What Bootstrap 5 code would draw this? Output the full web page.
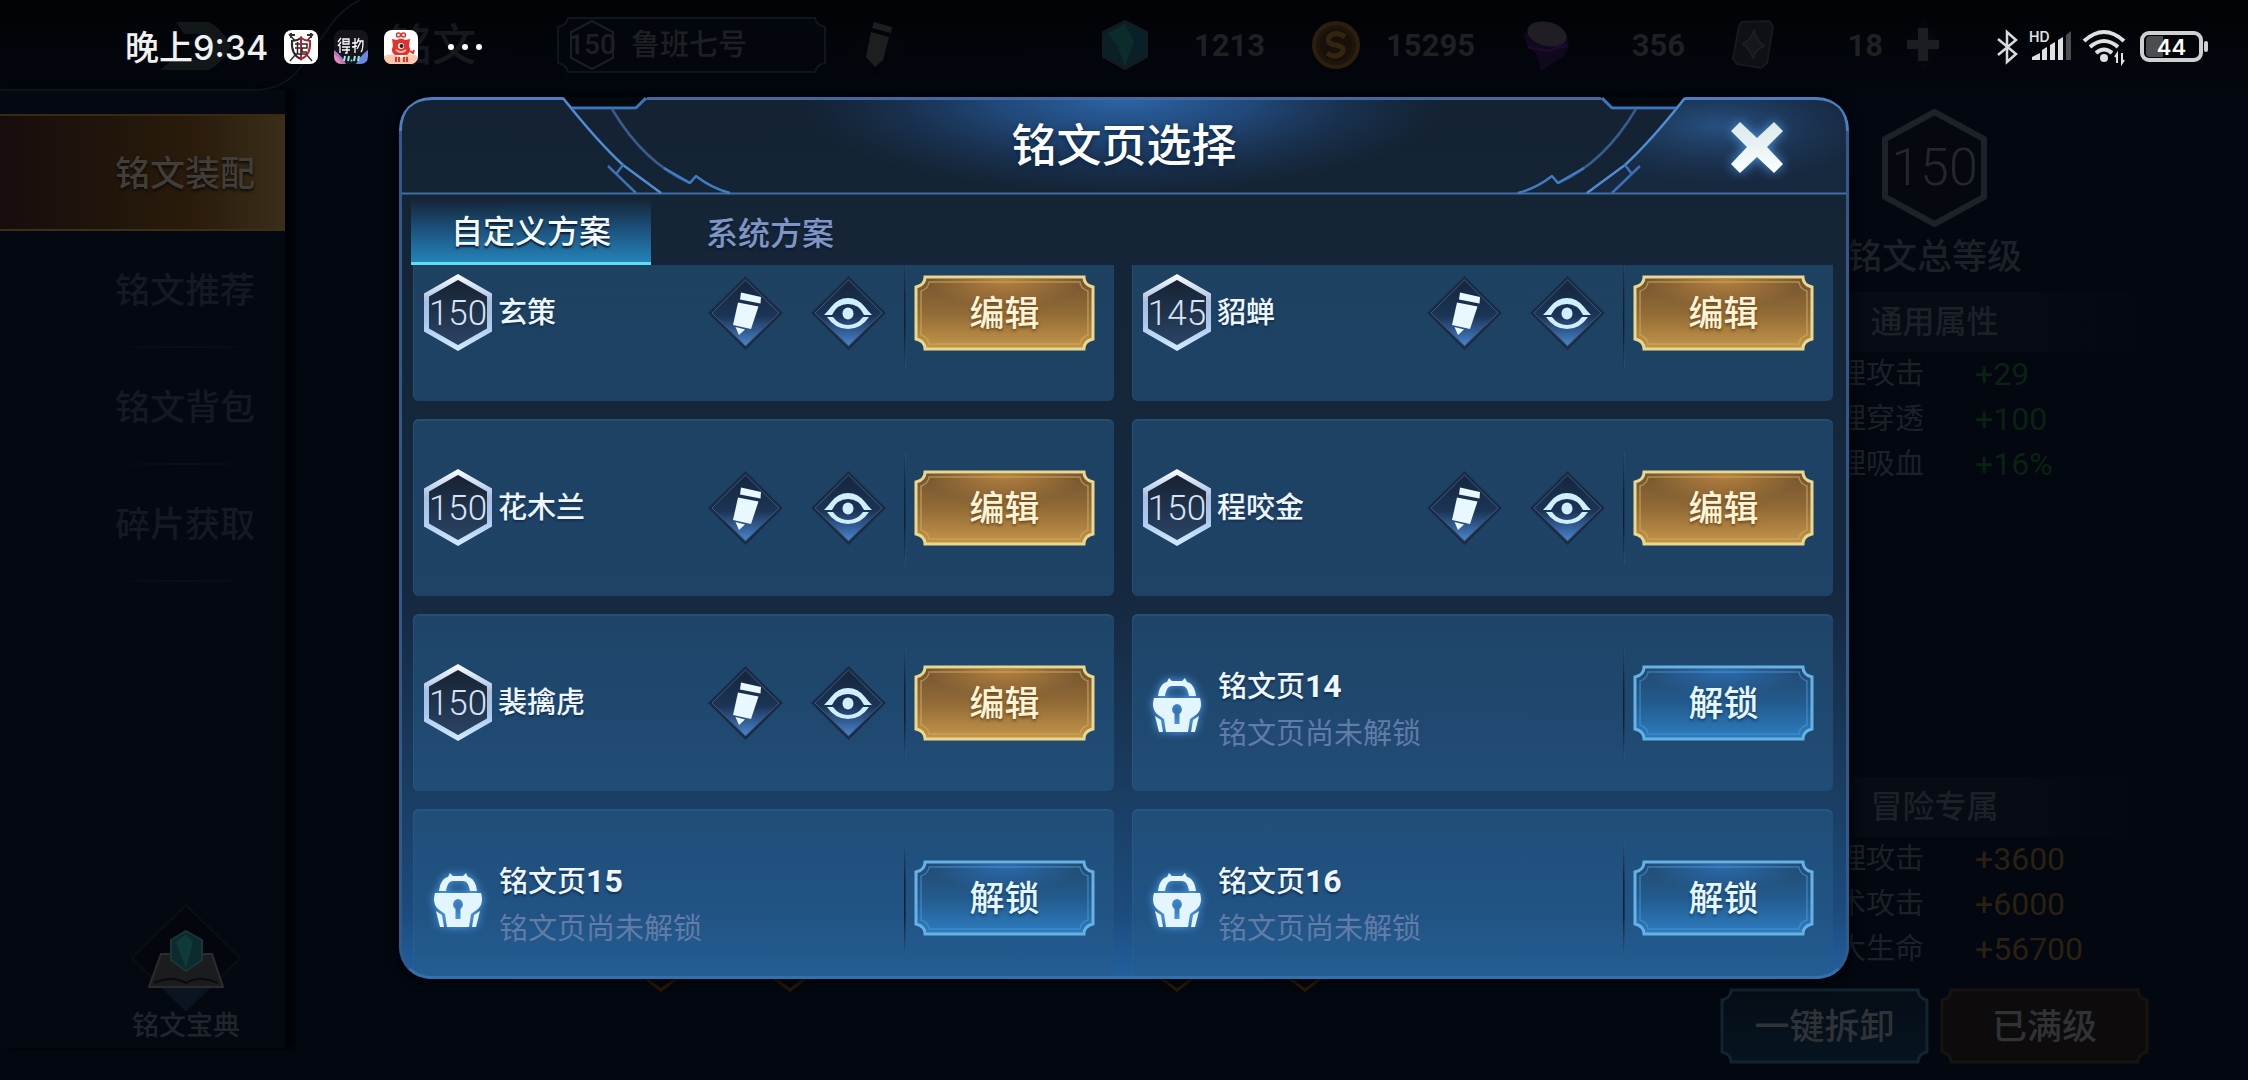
<!DOCTYPE html>
<html lang="zh-CN">
<head>
<meta charset="utf-8">
<meta name="viewport" content="width=device-width, initial-scale=1">
<title>铭文页选择</title>
<link rel="stylesheet" href="https://cdn.jsdelivr.net/npm/bootstrap@5.3.0/dist/css/bootstrap.min.css">
<style>
  body { background: #03070f; color: #fff; font-family: Roboto, "Noto Sans CJK SC", sans-serif; font-weight: 500; line-height: 1; overflow: hidden; }
  svg { display: block; flex: none; }
  button { font: inherit; }
  .stage { background: linear-gradient(#010305, #030710 110px, #03070f); }

  /* dimmed page */
  .topbar { height: 90px; padding-right: 307px; color: #1e2022; }
  .back-zone { width: 557px; height: 90px; }
  .back-zone svg.edge { position: absolute; left: 0; top: 0; }
  .page-name { position: absolute; left: 388px; top: 24px; font-size: 44px; color: #15191d; }
  .page-pick { width: 269px; height: 56px; font-size: 29px; color: #1d2023; padding-left: 12px; }
  .lvl-small { position: relative; width: 46px; height: 52px; font-size: 28px; }
  .coin-list { font-size: 31px; font-weight: 700; gap: 47px; }
  .coin-cell { width: 163px; }
  .coin-cell.narrow { width: 151px; margin-right: -25px; }
  .sidebar { width: 285px; background: #040911; box-shadow: 8px 0 6px #010207; margin-bottom: 32px; font-size: 35px; }
  .side-link { height: 117px; padding: 3px 0 0 115px; color: #141922; text-decoration: none; position: relative; }
  .side-link::after { content: ""; position: absolute; left: 105px; right: 23px; bottom: 0; height: 2px; background: linear-gradient(90deg, transparent, #0b0f18, transparent); }
  .side-link.current { color: #413e39; background: linear-gradient(90deg, #170d0d, #20140b 35%, #2b1c0b 70%, #3a2f1b); border-top: 2px solid #3a2a12; border-bottom: 2px solid #3a2f18; text-shadow: 0 2px 3px #0d0a05; }
  .side-link.current::after { display: none; }
  .codex { width: 112px; margin-left: 130px; font-size: 27px; color: #20242b; text-decoration: none; }
  .stats { width: 429px; margin-right: 99px; font-size: 29px; color: #1d2127; font-weight: 400; }
  .total-lvl { position: relative; width: 105px; height: 120px; font-size: 52px; font-weight: 300; color: #24272c; margin-top: 18px; }
  .total-name { height: 58px; font-size: 35px; font-weight: 500; margin-bottom: 6px; }
  .stat-head { height: 60px; font-size: 32px; font-weight: 500; background: linear-gradient(90deg, transparent, #060b14 30%, #060b14 70%, transparent); margin: 0; }
  .stat-list { padding-left: 88px; margin: 0; }
  .stat-list dt { width: 167px; font-weight: 400; line-height: 45px; }
  .stat-list dd { margin: 0; font-size: 32px; line-height: 45px; }
  .gain { color: #0a2210; }
  .gain-gold { color: #2a2111; }

  /* plates used as buttons */
  .plate { position: relative; height: 76px; border: 0; background: none; padding: 3px 0 0; font-size: 35px; flex: none; }
  .plate > svg { position: absolute; left: 0; top: 0; width: 100%; height: 100%; }
  .plate > span, .hexa > span { position: relative; }
  .plate-dim { width: 209px; color: #303336; }

  /* phone status bar */
  .phone-bar { position: absolute; left: 0; right: 0; top: 0; height: 94px; padding: 0 38px 0 125px; z-index: 30; }
  .clock { font-family: Inter, "Noto Sans CJK SC", sans-serif; font-size: 34px; color: #f0f1f1; white-space: nowrap; width: 159px; padding-top: 2px; }
  .batt { font-family: Inter, sans-serif; font-weight: 600; font-size: 22px; width: 70px; height: 32px; padding-right: 7px; }
  .signal { width: 46px; height: 36px; }
  .signal .hd { position: absolute; left: 1px; top: 1px; font: 600 14px/14px Inter, sans-serif; color: #dfe0e0; }

  /* dialog */
  .dlg-layer { position: absolute; inset: 0; padding: 97px 0 101px; z-index: 10; }
  .dlg { width: 64.5%; border-radius: 32px; background: linear-gradient(#142233, #152536 14%, #15283f 56%, #1a3c60 78%, #1c4a7c 92%, #22609f); box-shadow: 0 0 14px #000; position: relative; overflow: hidden; }
  .dlg-frame { position: absolute; inset: 34px 0 0; border: 3px solid #30598c; border-bottom-color: #3470ae; border-top: 0; border-radius: 0 0 32px 32px; pointer-events: none; z-index: 3; }
  .dlg-head { height: 98px; position: relative; }
  .dlg-head > svg { position: absolute; left: 0; top: 0; width: 100%; height: 100%; }
  .dlg-title { position: relative; font-size: 45px; font-weight: 500; text-shadow: 0 2px 5px #0b2344; padding-top: 2px; }
  .dlg-close { position: absolute; right: 64px; top: 22px; border: 0; background: none; padding: 0; }
  .dlg-close svg { filter: drop-shadow(0 0 6px #4d93dd); }
  .dlg-tabs { height: 70px; padding: 4px 0 0 12px; position: relative; z-index: 2; }
  .dlg-tab { width: 240px; border: 0; background: none; color: #7f95c6; font-size: 32px; padding: 3px 0 0; text-shadow: 0 2px 2px #0c1a2c; }
  .dlg-tab.current { color: #f4faff; background: linear-gradient(#16304a00, #1b4f78 45%, #2483b8); border-bottom: 3px solid #5fdcf5; }
  .dlg-tab + .dlg-tab { width: 238px; }
  .plan-scroll { overflow-y: auto; scrollbar-width: none; padding: 0 16px 0 14px; flex: 1 1 0; min-height: 0; }
  .plan-scroll::-webkit-scrollbar { display: none; }
  .plan-grid { display: grid; grid-template-columns: 1fr 1fr; gap: 18px; }
  .plan { height: 177px; border-radius: 6px; background: rgba(39, 92, 138, .52); box-shadow: inset 0 2px 0 #3a709f44, inset 1px 0 0 #3a709f44; padding: 0 19px 0 11px; }
  .hexa { position: relative; width: 68px; height: 77px; padding-top: 2px; font-weight: 300; font-size: 35px; color: #d5e3f5; margin-right: 6px; flex: none; }
  .hexa > svg, .total-lvl > svg, .lvl-small > svg { position: absolute; left: 0; top: 0; }
  .total-lvl > span, .lvl-small > span { position: relative; }
  .plan-name { font-size: 29px; color: #eef6ff; text-shadow: 0 2px 2px #12304f; padding-top: 2px; }
  .plan-name b { font-size: 32px; }
  .icon-btn { border: 0; background: none; padding: 0; margin-right: 26px; flex: none; }
  .rule { width: 2px; height: 112px; background: linear-gradient(transparent, #10233a 35%, #0e1f33 65%, transparent); border-right: 1px solid #3d6f9d44; margin: 0 8px 0 0; flex: none; }
  .icon-btn + .rule { margin-left: -9px; }
  .lock { margin: 4px 12px 0 9px; filter: drop-shadow(0 0 4px #55a8ff); }
  .locked-text { padding-top: 13px; }
  .locked-text .plan-name { line-height: 46px; }
  .locked-note { font-size: 29px; font-weight: 400; line-height: 48px; color: #617ca6; }
  .plate-gold, .plate-blue { width: 181px; }
  .plate-gold { color: #fff3d8; text-shadow: 0 2px 3px #6b4819; }
  .plate-blue { color: #e6f6ff; text-shadow: 0 2px 3px #123f6b; }
</style>
<script src="https://cdn.jsdelivr.net/npm/bootstrap@5.3.0/dist/js/bootstrap.bundle.min.js"></script>
</head>
<body>

<svg width="0" height="0" class="position-absolute" aria-hidden="true">
  <defs>
    <linearGradient id="gHex" x1="0" y1="0" x2="0" y2="1"><stop offset="0" stop-color="#f2f8ff"/><stop offset=".35" stop-color="#a8bfe0"/><stop offset=".65" stop-color="#a9c8f0"/><stop offset="1" stop-color="#cfe8ff"/></linearGradient>
    <linearGradient id="gHexIn" x1="0" y1="0" x2="0" y2="1"><stop offset="0" stop-color="#15202f"/><stop offset="1" stop-color="#2c4668"/></linearGradient>
    <linearGradient id="gDia" x1="0" y1="0" x2="0" y2="1"><stop offset="0" stop-color="#15253b"/><stop offset=".55" stop-color="#1b3557"/><stop offset="1" stop-color="#4a85cf"/></linearGradient>
    <linearGradient id="gGold" x1="0" y1="0" x2="0" y2="1"><stop offset="0" stop-color="#735430"/><stop offset=".5" stop-color="#916a36"/><stop offset="1" stop-color="#c5964a"/></linearGradient>
    <radialGradient id="gGoldTop" cx=".5" cy="0" r=".5"><stop offset="0" stop-color="#b88340"/><stop offset="1" stop-color="#b88340" stop-opacity="0"/></radialGradient>
    <linearGradient id="gBlue" x1="0" y1="0" x2="0" y2="1"><stop offset="0" stop-color="#22496f"/><stop offset=".5" stop-color="#235b8d"/><stop offset="1" stop-color="#2d7dc0"/></linearGradient>
    <radialGradient id="gBlueTop" cx=".5" cy="0" r=".5"><stop offset="0" stop-color="#2c6cb0"/><stop offset="1" stop-color="#2c6cb0" stop-opacity="0"/></radialGradient>
    <linearGradient id="gDimB" x1="0" y1="0" x2="0" y2="1"><stop offset="0" stop-color="#060d16"/><stop offset="1" stop-color="#061420"/></linearGradient>
    <radialGradient id="gHead" cx=".5" cy="0" r="1" gradientTransform="translate(.25 0) scale(.5 1)"><stop offset="0" stop-color="#2d66aa"/><stop offset=".4" stop-color="#255590" stop-opacity=".75"/><stop offset="1" stop-color="#1b3a66" stop-opacity="0"/></radialGradient>
    <radialGradient id="gCorner" cx=".5" cy=".3" r=".6"><stop offset="0" stop-color="#27507f"/><stop offset="1" stop-color="#1a3152" stop-opacity=".35"/></radialGradient>
    <linearGradient id="gX" x1="0" y1="0" x2="0" y2="1"><stop offset="0" stop-color="#dbe8ea"/><stop offset="1" stop-color="#fbffff"/></linearGradient>
  </defs>
  <symbol id="hex" viewBox="0 0 68 77"><path d="M34 3 65.500 21V56L34 74 2.500 56V21Z" fill="url(#gHexIn)" stroke="url(#gHex)" stroke-width="5"/></symbol>
  <symbol id="pen" viewBox="0 0 77 76">
    <path d="M38.500 1 76 38 38.500 75 1 38Z" fill="#192c46"/><path d="M38.500 5 72 38 38.500 71 5 38Z" fill="url(#gDia)" stroke="#41587a" stroke-width="1"/>
    <g fill="#e9f7ff"><path d="M34 17.500 54 22 53.500 28.500 33 24.500Z"/><path d="M31 27.500 51.500 31.500 44 54 26 50Z"/><path d="M28.500 52 38 54.500 32 60Z"/></g>
  </symbol>
  <symbol id="eye" viewBox="0 0 77 76">
    <path d="M38.500 1 76 38 38.500 75 1 38Z" fill="#192c46"/><path d="M38.500 5 72 38 38.500 71 5 38Z" fill="url(#gDia)" stroke="#41587a" stroke-width="1"/>
    <g fill="#cfeeff"><path d="M14 40Q18 36 21 32 28 23 38 23 48 23 55 32 58 36 62 40H54Q49 29 38 29 27 29 22 40Z"/><path d="M17 42H23Q29 50 38 50 47 50 53 42H59Q51 54 38 54 25 54 17 42Z"/><ellipse cx="38" cy="38.500" rx="5.500" ry="6"/></g>
  </symbol>
  <symbol id="lockIcon" viewBox="0 0 50 56">
    <g fill="#e3f5ff"><path d="M6 19C7 11 10 6 15 5L17 1 20 4H30L33 1 35 5C40 6 43 11 44 19H37C36 13 34 9 30 9H20C16 9 14 13 13 19Z"/>
    <path fill-rule="evenodd" d="M2 21H48Q51 31 45 37L38 42 36 55H14L12 42 5 37Q-1 31 2 21ZM25 27A5.500 5.500 0 0 0 22.500 37V47H27.500V37A5.500 5.500 0 0 0 25 27Z"/>
    <path d="M3 39 9 43 11 55H7Z"/><path d="M47 39 41 43 39 55H43Z"/></g>
  </symbol>
  <symbol id="plateGold" viewBox="0 0 180 76" preserveAspectRatio="none">
    <path d="M11 2H169Q169 10 178 12V64Q169 66 169 74H11Q11 66 2 64V12Q11 10 11 2Z" fill="url(#gGold)" stroke="#ead88f" stroke-width="3"/>
    <path d="M12 4H168V60H12Z" fill="url(#gGoldTop)"/>
    <path d="M15 7H165Q166 14 173 16V60Q166 62 165 69H15Q14 62 7 60V16Q14 14 15 7Z" fill="none" stroke="#d3a95c" stroke-opacity=".65" stroke-width="1.500"/>
  </symbol>
  <symbol id="plateBlue" viewBox="0 0 180 76" preserveAspectRatio="none">
    <path d="M11 2H169Q169 10 178 12V64Q169 66 169 74H11Q11 66 2 64V12Q11 10 11 2Z" fill="url(#gBlue)" stroke="#66b2e4" stroke-width="3"/>
    <path d="M12 4H168V60H12Z" fill="url(#gBlueTop)"/>
    <path d="M15 7H165Q166 14 173 16V60Q166 62 165 69H15Q14 62 7 60V16Q14 14 15 7Z" fill="none" stroke="#4a98d6" stroke-opacity=".6" stroke-width="1.500"/>
  </symbol>
  <symbol id="headDeco" viewBox="0 0 340 98">
    <path d="M164 1 177 13H238L248 1V-2H164Z" fill="#04080f"/>
    <g fill="none" stroke-width="2.500" stroke-linejoin="round">
      <path d="M1.500 98V34Q1.500 1.500 34 1.500H164" stroke="#4a7fc4" stroke-width="3"/>
      <path d="M164 1Q198 44 224 68L262 96" stroke="#4f8cd2"/>
      <path d="M173 11H237L247 1" stroke="#3e75bb" stroke-width="3"/>
      <path d="M213 12Q245 66 291 86" stroke="#3a5c8c"/>
      <path d="M265 71 291 86 297 79Q312 91 331 96" stroke="#3f7cc0"/>
      <path d="M209 69 237 96M224 68 217 77" stroke="#3c70b0"/>
    </g>
  </symbol>
</svg>

<div class="stage position-relative vh-100 overflow-hidden d-flex flex-column">

  <header class="topbar d-flex align-items-center">
    <div class="back-zone position-relative">
      <svg class="edge" width="557" height="94" aria-hidden="true"><path d="M0 90H255Q283 90 300 68L330 26Q340 10 360 0" fill="none" stroke="#0b141b" stroke-width="2"/><path d="M176 22H208Q220 26 231 46 220 66 208 70H160L172 60H200L212 46 200 34H184Z" fill="#121719"/></svg>
      <span class="page-name">铭文</span>
    </div>
    <div class="page-pick position-relative d-flex align-items-center gap-3">
      <svg class="position-absolute start-0 top-0" width="269" height="56" aria-hidden="true"><path d="M11 1H258Q259 8 268 10V46Q259 48 258 55H11Q10 48 1 46V10Q10 8 11 1Z" fill="#03060d" stroke="#10161d" stroke-width="2"/></svg>
      <span class="lvl-small d-flex align-items-center justify-content-center"><svg width="46" height="52" aria-hidden="true"><path d="M23 2 44 13V39L23 50 2 39V13Z" fill="none" stroke="#1b1f24" stroke-width="2"/></svg><span>150</span></span>
      <span class="position-relative">鲁班七号</span>
    </div>
    <svg class="ms-3" width="70" height="60" aria-hidden="true"><path d="M35 2 68 31 35 60 2 31Z" fill="#03050a"/><path d="M32 7 50 12 49 18 30 13ZM29 17 47 22 41 45 33 52 24 42Z" fill="#1b1f20"/></svg>
    <div class="coin-list d-flex align-items-center ms-auto">
      <span class="coin-cell d-flex align-items-center justify-content-between"><svg width="46" height="50" aria-hidden="true"><path d="M23 1 45 12V37L23 49 1 37V12Z" fill="#0a2024" stroke="#181a22" stroke-width="2"/><path d="M23 4 6 13 15 25 23 46 32 22 41 13Z" fill="#0c2c2c"/><path d="M23 4 32 22 42 34V14Z" fill="#082029"/></svg>1213</span>
      <span class="coin-cell d-flex align-items-center justify-content-between"><svg width="48" height="50" aria-hidden="true"><circle cx="24" cy="25" r="22" fill="#1e160b" stroke="#2d1f0d" stroke-width="4"/><circle cx="24" cy="25" r="16" fill="#17110a"/><path d="M33 17Q24 10 17 17 14 24 24 25 34 27 30 33 23 39 15 33" fill="none" stroke="#33250f" stroke-width="5"/></svg>15295</span>
      <span class="coin-cell d-flex align-items-center justify-content-between"><svg width="48" height="54" aria-hidden="true"><path d="M1 15 6 29 14 35 19 53 42 38 47 28 45 18Z" fill="#12081d"/><ellipse cx="25" cy="16" rx="20" ry="12" transform="rotate(14 25 16)" fill="#201d24"/><path d="M6 29 26 33 45 27" stroke="#1e0b2c" stroke-width="3" fill="none"/></svg>356</span>
      <span class="coin-cell narrow d-flex align-items-center justify-content-between"><svg width="42" height="50" aria-hidden="true"><path d="M10 2 37 1 41 6 35 43 29 48 5 44 1 39 7 6Z" fill="#0e1015" stroke="#17191d" stroke-width="2"/><path d="M22 10Q24 20 32 26 22 30 21 39 19 30 11 24 20 19 22 10Z" fill="#15171b" stroke="#1b1e22" stroke-width="2"/></svg>18</span>
      <svg width="36" height="60" aria-hidden="true"><path d="M18 4 35 30 18 58 1 30Z" fill="#04070d"/><path d="M13 13H23V25H34V34H23V46H13V34H2V25H13Z" fill="#1b1e21"/></svg>
    </div>
  </header>

  <div class="d-flex justify-content-between flex-grow-1">
    <nav class="sidebar d-flex flex-column pt-4">
      <a href="#" class="side-link current d-flex align-items-center">铭文装配</a>
      <a href="#" class="side-link d-flex align-items-center">铭文推荐</a>
      <a href="#" class="side-link d-flex align-items-center">铭文背包</a>
      <a href="#" class="side-link d-flex align-items-center">碎片获取</a>
      <a href="#" class="codex mt-auto d-flex flex-column align-items-center text-nowrap pb-2">
        <svg width="112" height="110" viewBox="0 0 112 110" aria-hidden="true"><path d="M56 2 110 55 56 108 2 55Z" fill="#03060d" stroke="#0b0e14" stroke-width="2"/><path d="M32 85H80L56 108Z" fill="#0b1421"/><path d="M31 51H82L93 84H19Z" fill="#1b1c1e" stroke="#2c2c2c" stroke-width="2"/><path d="M24 80Q42 72 56 80 70 72 88 80" fill="none" stroke="#080b10" stroke-width="2"/><path d="M56 28 72 37V57L56 68 41 57V37Z" fill="#0b2b2e" stroke="#1b3438" stroke-width="2"/><path d="M56 31 46 39 56 66 63 39Z" fill="#0f3a3a"/></svg>
        <span>铭文宝典</span>
      </a>
    </nav>

    <div class="flex-grow-1 d-flex align-items-end justify-content-center pe-4">
      <svg class="me-3" width="676" height="102" viewBox="0 0 676 102" aria-hidden="true"><path d="M0 0 16 12 32 0M129 0 145 12 161 0M516 0 532 12 548 0M644 0 660 12 676 0" fill="none" stroke="#2a1908" stroke-width="3"/></svg>
    </div>

    <aside class="stats d-flex flex-column">
      <div class="total-lvl d-flex align-items-center justify-content-center align-self-center"><svg width="105" height="120" aria-hidden="true"><path d="M52.500 4 102 31V89L52.500 116 3 89V31Z" fill="#05080f" stroke="#1d2128" stroke-width="6"/></svg><span>150</span></div>
      <div class="total-name d-flex align-items-center justify-content-center">铭文总等级</div>
      <h2 class="stat-head d-flex align-items-center justify-content-center">通用属性</h2>
      <dl class="stat-list">
        <div class="d-flex"><dt>物理攻击</dt><dd class="gain">+29</dd></div>
        <div class="d-flex"><dt>物理穿透</dt><dd class="gain">+100</dd></div>
        <div class="d-flex"><dt>物理吸血</dt><dd class="gain">+16%</dd></div>
      </dl>
      <h2 class="stat-head d-flex align-items-center justify-content-center mt-auto">冒险专属</h2>
      <dl class="stat-list">
        <div class="d-flex"><dt>物理攻击</dt><dd class="gain-gold">+3600</dd></div>
        <div class="d-flex"><dt>法术攻击</dt><dd class="gain-gold">+6000</dd></div>
        <div class="d-flex"><dt>最大生命</dt><dd class="gain-gold">+56700</dd></div>
      </dl>
      <div class="d-flex justify-content-between pt-3 pb-3 fw-medium">
        <button type="button" class="plate plate-dim"><svg viewBox="0 0 209 76" preserveAspectRatio="none" aria-hidden="true"><path d="M11 2H198Q198 10 207 12V64Q198 66 198 74H11Q11 66 2 64V12Q11 10 11 2Z" fill="url(#gDimB)" stroke="#11242f" stroke-width="3"/></svg><span>一键拆卸</span></button>
        <button type="button" class="plate plate-dim"><svg viewBox="0 0 209 76" preserveAspectRatio="none" aria-hidden="true"><path d="M11 2H198Q198 10 207 12V64Q198 66 198 74H11Q11 66 2 64V12Q11 10 11 2Z" fill="#0d0b0b" stroke="#17140f" stroke-width="3"/></svg><span>已满级</span></button>
      </div>
    </aside>
  </div>

  <div class="dlg-layer d-flex justify-content-center">
    <section class="dlg d-flex flex-column" role="dialog" aria-labelledby="dlgTitle">
      <div class="dlg-head d-flex align-items-center justify-content-center">
        <svg viewBox="0 0 1450 98" preserveAspectRatio="none" aria-hidden="true">
          <rect x="400" width="650" height="97" fill="url(#gHead)"/>
          <path d="M1286 0Q1252 44 1226 68L1188 96H1450V0Z" fill="url(#gCorner)"/>
          <path d="M247 1.500H1203" stroke="#41699f" stroke-width="3"/>
          <path d="M0 96.500H1450" stroke="#3f6ea6" stroke-width="2"/>
          <use href="#headDeco" width="340" height="98"/>
          <use href="#headDeco" width="340" height="98" transform="translate(1450 0) scale(-1 1)"/>
        </svg>
        <h1 id="dlgTitle" class="dlg-title m-0">铭文页选择</h1>
        <button type="button" class="dlg-close" aria-label="关闭"><svg width="56" height="56" viewBox="0 0 56 56"><path d="M11 3 28 19 45 3 54 12 38 28 54 45 45 54 28 38 11 54 2 45 18 28 2 12Z" fill="url(#gX)"/></svg></button>
      </div>
      <div class="dlg-tabs d-flex" role="tablist">
        <button type="button" class="dlg-tab current" role="tab" aria-selected="true">自定义方案</button>
        <button type="button" class="dlg-tab" role="tab" aria-selected="false">系统方案</button>
      </div>
      <div class="plan-scroll" id="planScroll">
        <div class="plan-grid">
          <article class="plan d-flex align-items-center">
            <div class="hexa d-flex align-items-center justify-content-center"><svg width="68" height="77"><use href="#hex"/></svg><span>150</span></div>
            <div class="plan-name me-auto">玄策</div>
            <button type="button" class="icon-btn" aria-label="改名"><svg width="77" height="76"><use href="#pen"/></svg></button>
            <button type="button" class="icon-btn" aria-label="查看"><svg width="77" height="76"><use href="#eye"/></svg></button>
            <div class="rule"></div>
            <button type="button" class="plate plate-gold"><svg><use href="#plateGold"/></svg><span>编辑</span></button>
          </article>
          <article class="plan d-flex align-items-center">
            <div class="hexa d-flex align-items-center justify-content-center"><svg width="68" height="77"><use href="#hex"/></svg><span>145</span></div>
            <div class="plan-name me-auto">貂蝉</div>
            <button type="button" class="icon-btn" aria-label="改名"><svg width="77" height="76"><use href="#pen"/></svg></button>
            <button type="button" class="icon-btn" aria-label="查看"><svg width="77" height="76"><use href="#eye"/></svg></button>
            <div class="rule"></div>
            <button type="button" class="plate plate-gold"><svg><use href="#plateGold"/></svg><span>编辑</span></button>
          </article>
          <article class="plan d-flex align-items-center">
            <div class="hexa d-flex align-items-center justify-content-center"><svg width="68" height="77"><use href="#hex"/></svg><span>150</span></div>
            <div class="plan-name me-auto">花木兰</div>
            <button type="button" class="icon-btn" aria-label="改名"><svg width="77" height="76"><use href="#pen"/></svg></button>
            <button type="button" class="icon-btn" aria-label="查看"><svg width="77" height="76"><use href="#eye"/></svg></button>
            <div class="rule"></div>
            <button type="button" class="plate plate-gold"><svg><use href="#plateGold"/></svg><span>编辑</span></button>
          </article>
          <article class="plan d-flex align-items-center">
            <div class="hexa d-flex align-items-center justify-content-center"><svg width="68" height="77"><use href="#hex"/></svg><span>150</span></div>
            <div class="plan-name me-auto">程咬金</div>
            <button type="button" class="icon-btn" aria-label="改名"><svg width="77" height="76"><use href="#pen"/></svg></button>
            <button type="button" class="icon-btn" aria-label="查看"><svg width="77" height="76"><use href="#eye"/></svg></button>
            <div class="rule"></div>
            <button type="button" class="plate plate-gold"><svg><use href="#plateGold"/></svg><span>编辑</span></button>
          </article>
          <article class="plan d-flex align-items-center">
            <div class="hexa d-flex align-items-center justify-content-center"><svg width="68" height="77"><use href="#hex"/></svg><span>150</span></div>
            <div class="plan-name me-auto">裴擒虎</div>
            <button type="button" class="icon-btn" aria-label="改名"><svg width="77" height="76"><use href="#pen"/></svg></button>
            <button type="button" class="icon-btn" aria-label="查看"><svg width="77" height="76"><use href="#eye"/></svg></button>
            <div class="rule"></div>
            <button type="button" class="plate plate-gold"><svg><use href="#plateGold"/></svg><span>编辑</span></button>
          </article>
          <article class="plan d-flex align-items-center">
            <svg class="lock" width="50" height="56"><use href="#lockIcon"/></svg>
            <div class="locked-text ms-1 me-auto"><div class="plan-name">铭文页<b>14</b></div><div class="locked-note">铭文页尚未解锁</div></div>
            <div class="rule"></div>
            <button type="button" class="plate plate-blue"><svg><use href="#plateBlue"/></svg><span>解锁</span></button>
          </article>
          <article class="plan d-flex align-items-center">
            <svg class="lock" width="50" height="56"><use href="#lockIcon"/></svg>
            <div class="locked-text ms-1 me-auto"><div class="plan-name">铭文页<b>15</b></div><div class="locked-note">铭文页尚未解锁</div></div>
            <div class="rule"></div>
            <button type="button" class="plate plate-blue"><svg><use href="#plateBlue"/></svg><span>解锁</span></button>
          </article>
          <article class="plan d-flex align-items-center">
            <svg class="lock" width="50" height="56"><use href="#lockIcon"/></svg>
            <div class="locked-text ms-1 me-auto"><div class="plan-name">铭文页<b>16</b></div><div class="locked-note">铭文页尚未解锁</div></div>
            <div class="rule"></div>
            <button type="button" class="plate plate-blue"><svg><use href="#plateBlue"/></svg><span>解锁</span></button>
          </article>
        </div>
      </div>
      <div class="dlg-frame"></div>
    </section>
  </div>

  <div class="phone-bar d-flex align-items-center">
    <span class="clock">晚上9:34</span>
    <svg width="34" height="34" viewBox="0 0 34 34" aria-hidden="true"><rect width="34" height="34" rx="8" fill="#fff"/><path d="M5 4 28 31M29 4 6 31" stroke="#33302f" stroke-width="1.500"/><path d="M8 11Q13 11 17 8V29Q7 25 8 11Z" fill="#fff" stroke="#2b2726" stroke-width="2"/><path d="M26 11Q21 11 17 8V29Q27 25 26 11Z" fill="#fff" stroke="#b5242a" stroke-width="2"/><path d="M11 14H16M13.500 12V24M11 18H16M11 24H23M18 14H23V18H18V22H23" fill="none" stroke="#2b2726" stroke-width="1.500"/><path d="M5 5H11M7 3V8M23 5H29M27 3V8" stroke="#33302f" stroke-width="2"/></svg>
    <svg class="ms-3" width="34" height="34" viewBox="0 0 34 34" aria-hidden="true"><rect width="34" height="34" rx="8" fill="#15151c"/><path d="M0 20Q8 26 12 34H8Q0 34 0 26Z" fill="#b86fc8"/><path d="M34 20Q26 26 22 34H26Q34 34 34 26Z" fill="#6f87e0"/><path d="M0 24Q6 28 8 34 0 33 0 26Z" fill="#e28ab0"/><path d="M7 8 4 12M7 12 4 16M6 15V23M9 9H15V14H9ZM9 11.500H15M8 17H16M8 20H16M13 17V23H11M21 8V23M18 13H23M18 17 23 16M25 8 23 13M24 11H29Q29 20 27 22M27 11 23 19" fill="none" stroke="#fff" stroke-width="1.300"/><path d="M11 26 10 31M15 26 14 31M21 26 20 31M25 26 24 31" stroke="#8df0dc" stroke-width="2"/><circle cx="17.500" cy="30.500" r="1" fill="#8df0dc"/></svg>
    <svg class="ms-3" width="34" height="34" viewBox="0 0 34 34" aria-hidden="true"><rect width="34" height="34" rx="8" fill="#fff"/><path d="M0 26Q8 22 17 28 26 22 34 26V27Q33 34 26 34H8Q0 34 0 26Z" fill="#ffc7ae"/><circle cx="14.500" cy="5" r="2" fill="none" stroke="#e0322c" stroke-width="1.500"/><circle cx="19.500" cy="5" r="2" fill="none" stroke="#e0322c" stroke-width="1.500"/><path d="M8 9 13 10Q17 7 21 10L26 9 25 16Q28 22 23 25H11Q6 22 9 16Z" fill="#e5302c"/><circle cx="17" cy="16" r="3" fill="#fff"/><circle cx="17.500" cy="16" r="2" fill="#222"/><path d="M12 20Q17 24 22 20" stroke="#ffb9a0" stroke-width="2" fill="none"/><path d="M26 21 29 23 30 20" stroke="#e5302c" stroke-width="2" fill="none"/><path d="M12 27V32M15 27V32M20 27V32M23 27V32" stroke="#e5302c" stroke-width="2"/></svg>
    <svg class="ms-4" width="50" height="12" aria-hidden="true"><g fill="#fff"><circle cx="9" cy="6" r="3"/><circle cx="23" cy="6" r="3"/><circle cx="37" cy="6" r="3"/></g></svg>

    <svg class="ms-auto" width="24" height="36" viewBox="0 0 24 36" aria-hidden="true"><path d="M2 10 20 25 11 33V3L20 11 2 26" fill="none" stroke="#d9dada" stroke-width="2.500"/></svg>
    <span class="signal position-relative ms-2"><svg width="46" height="36" viewBox="0 0 46 36" aria-hidden="true"><g fill="#dfe0e0"><path d="M4 28 12 24V31H4Z"/><path d="M14 21 19 18V31H14Z"/><path d="M22 16 27 13V31H22Z"/><path d="M30 11 35 8V31H30Z"/></g><path d="M38 6 43 2V31H38Z" fill="#4b4d4f"/></svg><span class="hd">HD</span></span>
    <svg class="ms-2 me-1" width="46" height="38" viewBox="0 0 46 38" aria-hidden="true"><g fill="none" stroke="#dfe0e0" stroke-width="4"><path d="M2 13Q22-5 42 13"/><path d="M8 19Q22 7 36 19"/><path d="M14 25Q22 18 30 25"/></g><circle cx="22" cy="30" r="4" fill="#dfe0e0"/><path d="M35 35V26L33 29M40 25V35L42 32" fill="none" stroke="#dfe0e0" stroke-width="2"/></svg>
    <span class="batt position-relative ms-2 d-flex align-items-center justify-content-center"><svg class="position-absolute start-0 top-0" width="70" height="32" viewBox="0 0 70 32" aria-hidden="true"><path d="M10 5H23V26H10Q6 26 6 22V9Q6 5 10 5Z" fill="#4b4d4f"/><rect x="2" y="2" width="59" height="27" rx="7" fill="none" stroke="#cfd1d1" stroke-width="4"/><path d="M66 12V19" stroke="#cfd1d1" stroke-width="4" stroke-linecap="round"/></svg><span class="position-relative">44</span></span>
  </div>
</div>

<script>
  document.getElementById('planScroll').scrollTop = 41;
</script>
</body>
</html>
